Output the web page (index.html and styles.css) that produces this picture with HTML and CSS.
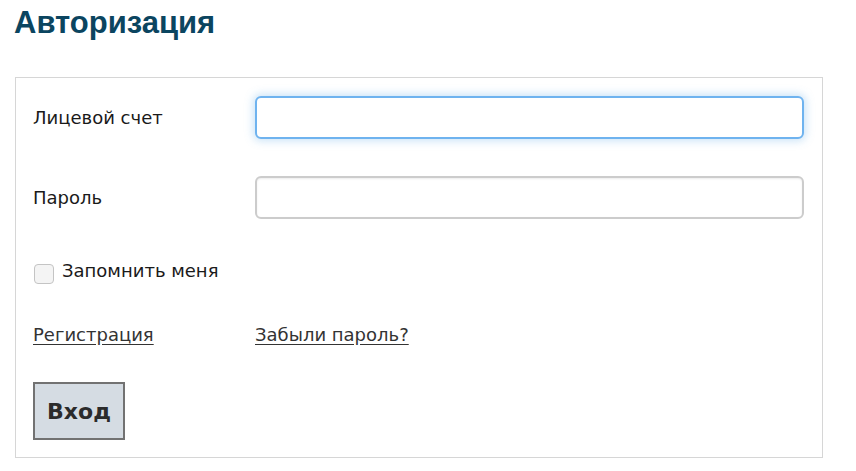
FILE: index.html
```html
<!DOCTYPE html>
<html lang="ru">
<head>
<meta charset="utf-8">
<title>Авторизация</title>
<link rel="stylesheet" href="styles.css">
</head>
<body>
<h1 class="title">Авторизация</h1>
<form class="box">
  <div class="row row-first">
    <label class="label" for="acc">Лицевой счет</label>
    <input class="field field-focus" id="acc" type="text">
  </div>
  <div class="row row-second">
    <label class="label" for="pwd">Пароль</label>
    <input class="field" id="pwd" type="password">
  </div>
  <label class="remember">
    <input class="check" type="checkbox">
    <span>Запомнить меня</span>
  </label>
  <div class="row links">
    <a class="link" href="#">Регистрация</a>
    <a class="link" href="#">Забыли пароль?</a>
  </div>
  <button class="btn" type="button">Вход</button>
</form>
</body>
</html>
```

FILE: styles.css
```css
html, body {
  margin: 0;
  padding: 0;
  background: #ffffff;
}
body {
  font-family: "DejaVu Sans", Verdana, sans-serif;
  font-size: 18px;
  color: #1a1a1a;
}
.title {
  font-family: "Liberation Sans", Arial, sans-serif;
  font-size: 31px;
  font-weight: bold;
  color: #0b4560;
  margin: 0;
  padding: 5px 0 0 14px;
  line-height: 36px;
  height: 70px;
  box-sizing: border-box;
}
.box {
  margin: 7px 0 0 15px;
  width: 808px;
  height: 381px;
  box-sizing: border-box;
  border: 1px solid #d6d6d6;
  padding: 18px 18px 0 17px;
  display: flex;
  flex-direction: column;
}
.row {
  display: grid;
  grid-template-columns: 222px 1fr;
  align-items: center;
}
.row-second {
  margin-top: 37px;
}
.label {
  line-height: 22px;
}
.field {
  height: 43px;
  box-sizing: border-box;
  border: 2px solid #cccccc;
  border-radius: 6px;
  background: #fff;
  box-shadow: inset 0 1px 2px rgba(0,0,0,0.08);
  outline: none;
  margin: 0;
  width: 100%;
}
.field-focus {
  border-color: #6fb3ef;
  box-shadow: 0 0 9px 2px rgba(102,175,233,0.35);
}
.remember {
  margin-top: 44px;
  display: flex;
  align-items: center;
  gap: 8px;
  line-height: 22px;
}
.remember span {
  position: relative;
  top: -3px;
}
.check {
  appearance: none;
  -webkit-appearance: none;
  margin: 0 0 0 1px;
  width: 20px;
  height: 20px;
  box-sizing: border-box;
  border: 1px solid #c4c4c4;
  border-radius: 4px;
  background: #f4f4f4;
}
.links {
  margin-top: 39px;
}
.link {
  color: #333333;
  text-decoration: underline;
  text-underline-offset: 3px;
  line-height: 22px;
  justify-self: start;
}
.btn {
  margin-top: 36px;
  align-self: flex-start;
  width: 92px;
  height: 58px;
  box-sizing: border-box;
  border: 2px solid #727272;
  background: #d5dce3;
  font-family: "DejaVu Sans", Verdana, sans-serif;
  font-weight: bold;
  font-size: 22px;
  color: #2b2b2b;
  padding: 0;
}
```
